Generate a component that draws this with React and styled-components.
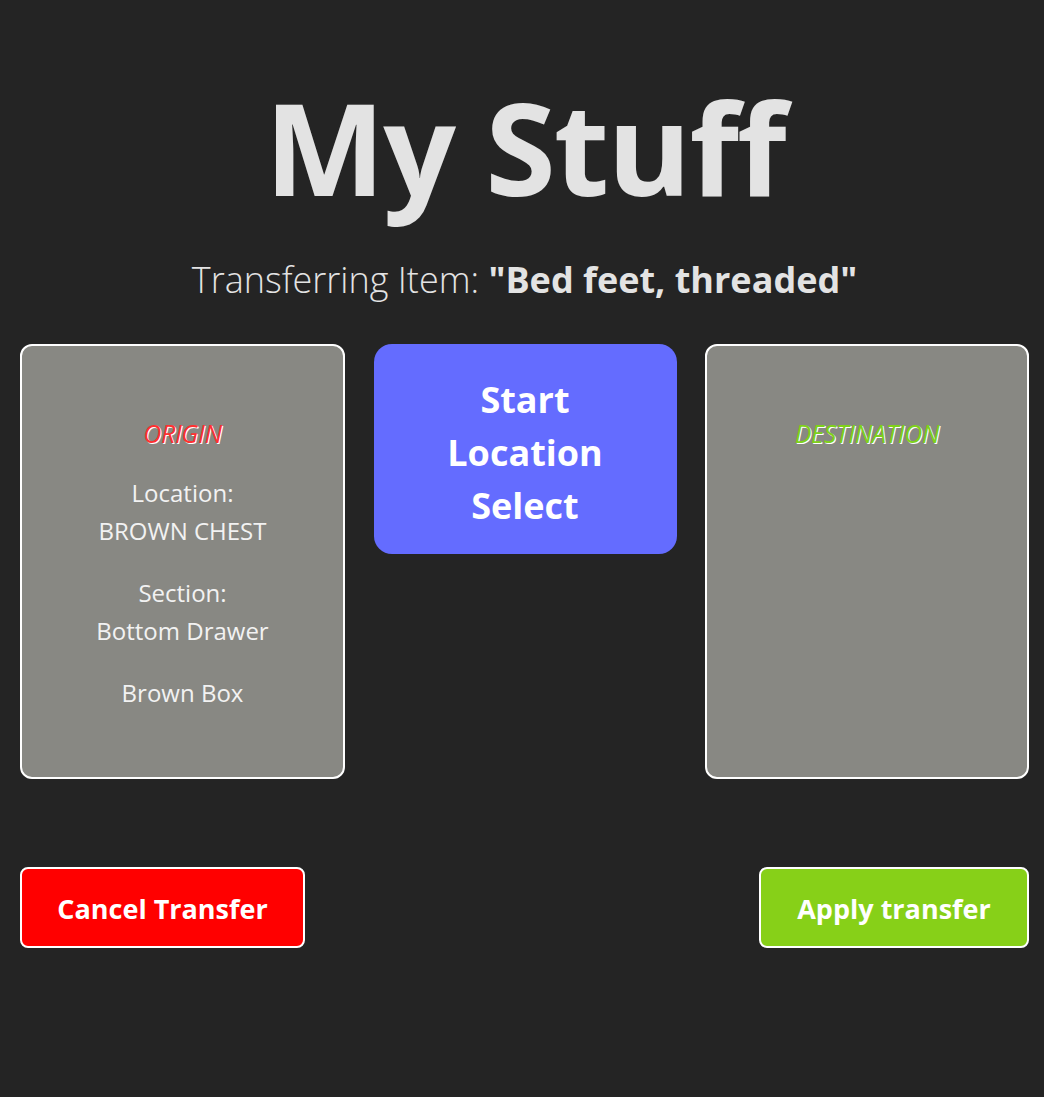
import React from "react";
import styled, { createGlobalStyle } from "styled-components";

const GlobalStyle = createGlobalStyle`
  html, body {
    margin: 0;
    padding: 0;
    background-color: #242424;
    color: rgba(255, 255, 255, 0.87);
    font-family: "Open Sans", "Noto Sans", sans-serif;
  }
`;

const Page = styled.div`
  min-height: 1097px;
  padding: 0 15px 0 20px;
  box-sizing: border-box;
`;

const Title = styled.h1`
  margin: 0;
  padding-top: 72px;
  text-align: center;
  font-size: 128px;
  font-weight: 700;
  line-height: 150px;
  letter-spacing: -2px;
  color: #e3e3e3;
`;

const Subtitle = styled.h2`
  margin: 34px 0 0;
  text-align: center;
  font-size: 36px;
  font-weight: 300;
  line-height: 48px;
  color: #e3e3e3;
  b {
    font-weight: 700;
  }
`;

const Row = styled.div`
  display: grid;
  grid-template-columns: 325px 303px 324px;
  justify-content: space-between;
  align-items: start;
  margin-top: 40px;
`;

const Card = styled.div`
  height: 435px;
  box-sizing: border-box;
  border: 2px solid #ffffff;
  border-radius: 12px;
  background-color: #888883;
  padding-top: 68px;
  text-align: center;
  color: #f2f2f2;
  font-size: 24px;
  line-height: 38px;
`;

const Heading = styled.div`
  font-style: italic;
  font-size: 25px;
  letter-spacing: -0.3px;
  color: ${(p) => p.color};
  text-shadow: 1px 1px 0 #ffffff;
  margin-bottom: 22px;
`;

const Field = styled.div`
  margin-bottom: 24px;
`;

const SelectButton = styled.button`
  height: 210px;
  border: none;
  border-radius: 18px;
  background-color: #646cff;
  color: #ffffff;
  font-family: inherit;
  font-size: 36px;
  font-weight: 700;
  line-height: 53px;
  padding: 6px 60px 0;
  cursor: pointer;
`;

const Actions = styled.div`
  display: flex;
  justify-content: space-between;
  margin-top: 88px;
`;

const ActionButton = styled.button`
  height: 81px;
  width: ${(p) => p.w}px;
  box-sizing: border-box;
  border: 2px solid #ffffff;
  border-radius: 8px;
  background-color: ${(p) => p.bg};
  color: #ffffff;
  font-family: inherit;
  font-size: 27px;
  font-weight: 700;
  padding-top: 3px;
  cursor: pointer;
`;

export default function App() {
  return (
    <>
      <GlobalStyle />
      <Page>
        <Title>My Stuff</Title>
        <Subtitle>
          Transferring Item: <b>"Bed feet, threaded"</b>
        </Subtitle>
        <Row>
          <Card>
            <Heading color="#ff3030">ORIGIN</Heading>
            <Field>
              Location:
              <br />
              BROWN CHEST
            </Field>
            <Field>
              Section:
              <br />
              Bottom Drawer
            </Field>
            <Field>Brown Box</Field>
          </Card>
          <SelectButton>Start Location Select</SelectButton>
          <Card>
            <Heading color="#7fd11a">DESTINATION</Heading>
          </Card>
        </Row>
        <Actions>
          <ActionButton bg="#ff0000" w={285}>
            Cancel Transfer
          </ActionButton>
          <ActionButton bg="#87d018" w={270}>
            Apply transfer
          </ActionButton>
        </Actions>
      </Page>
    </>
  );
}
